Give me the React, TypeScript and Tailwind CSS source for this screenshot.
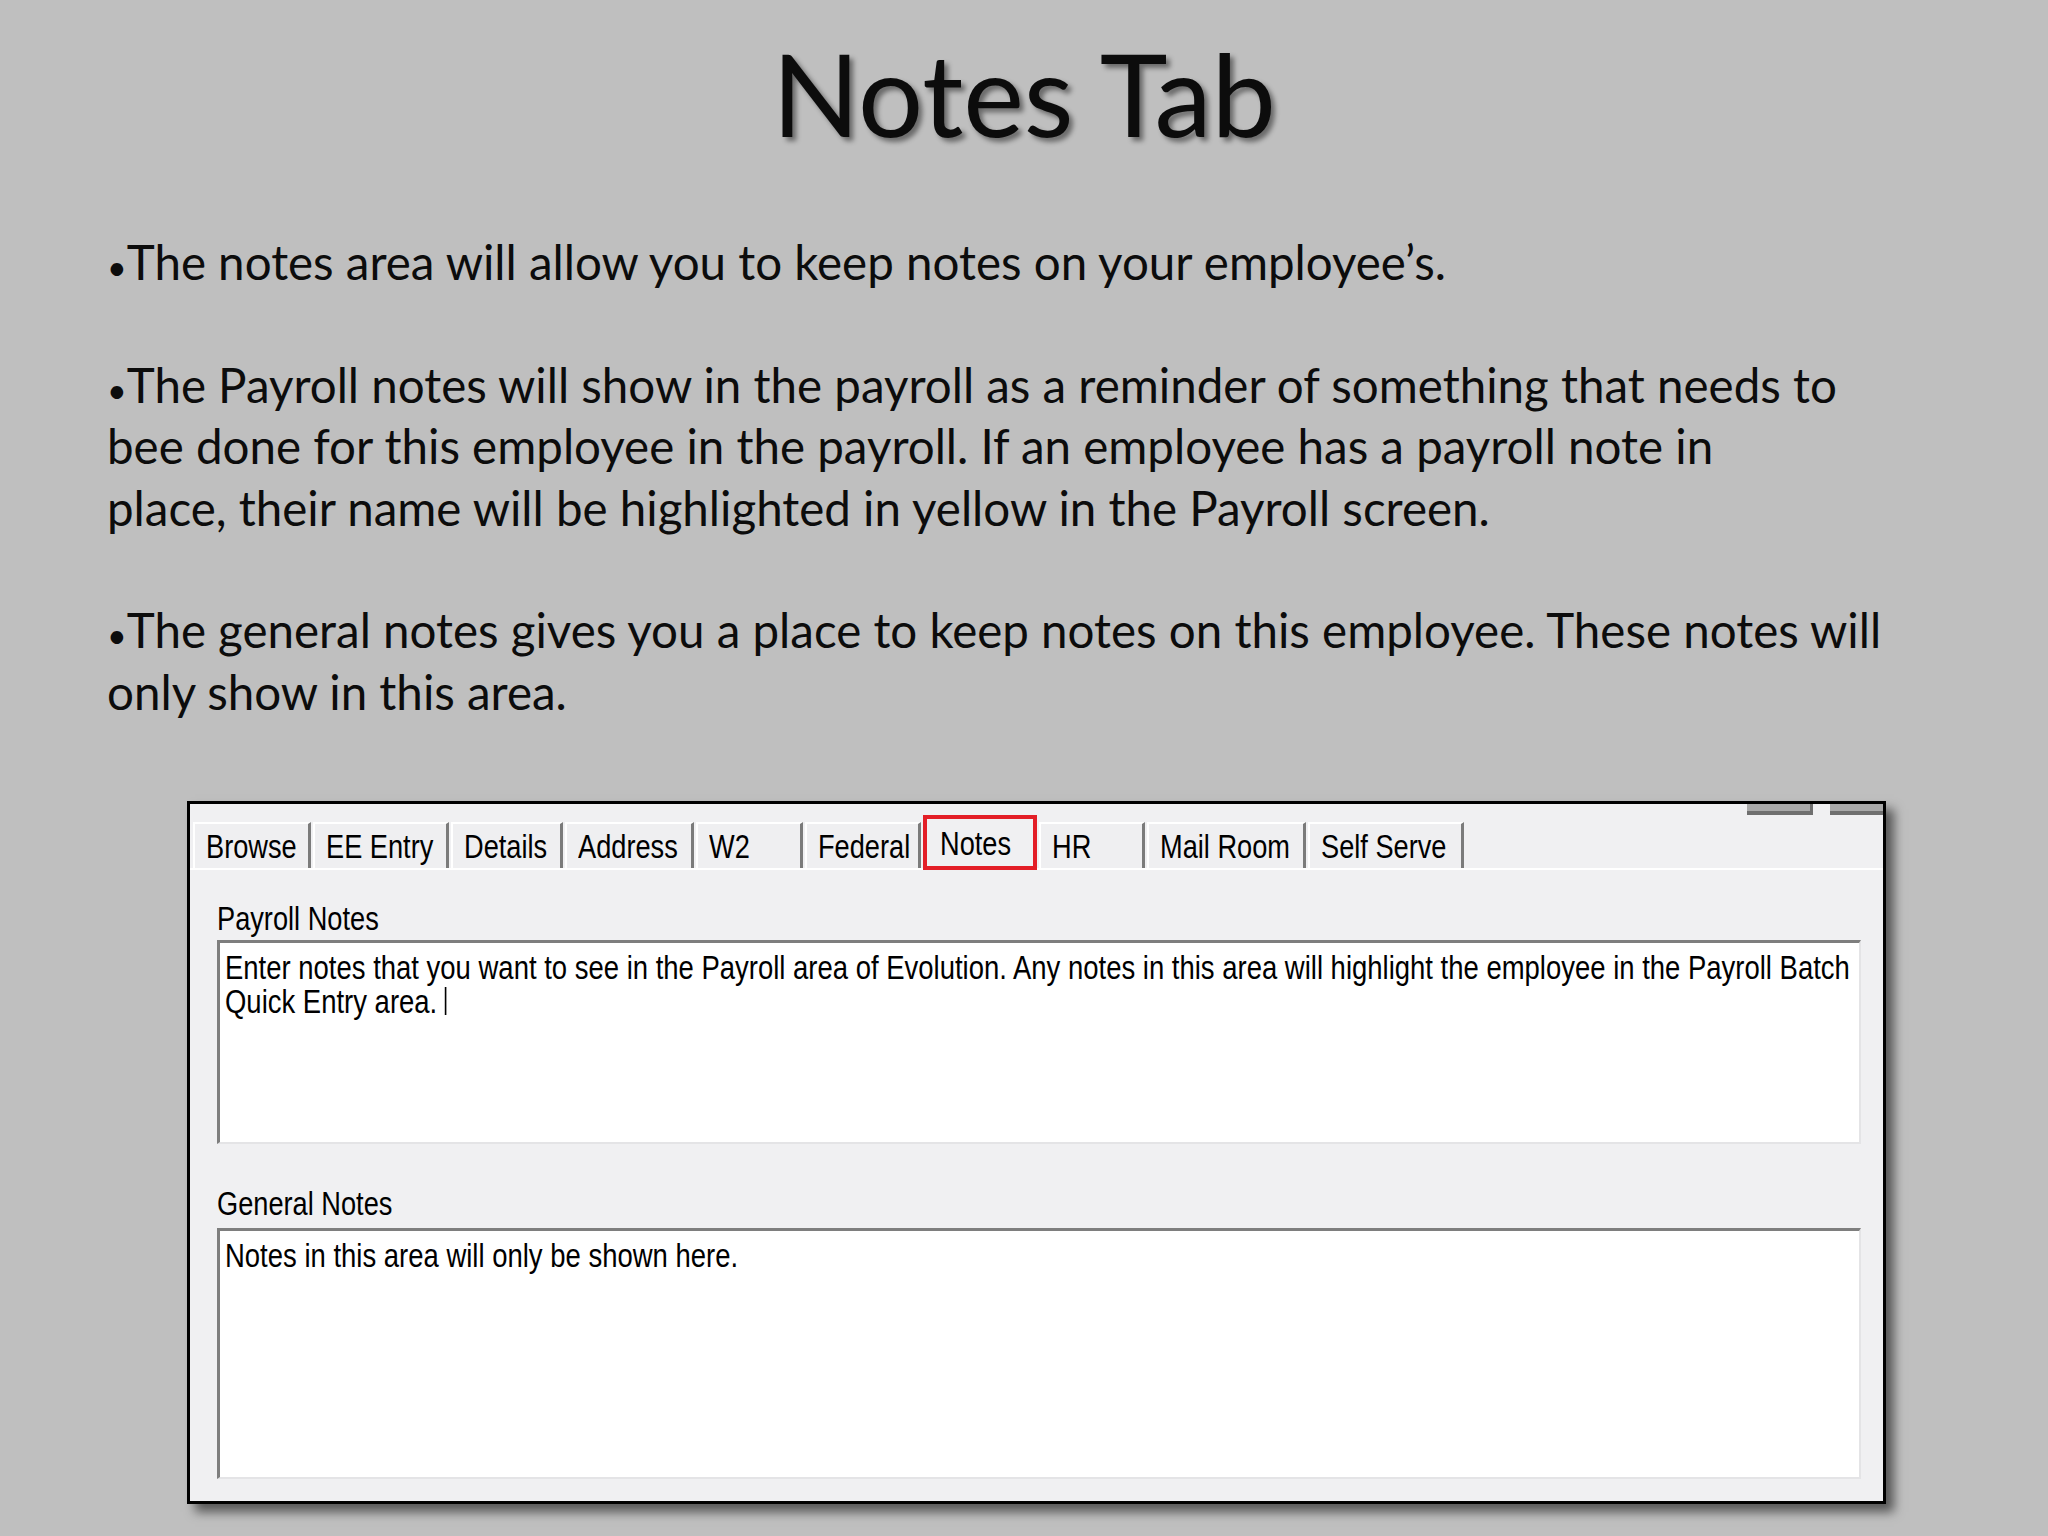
import React from "react";

// Tabs along the top of the employee screen, widths read off the screenshot
const tabs: { label: string; w: string; active?: boolean }[] = [
  { label: "Browse", w: "w-[118px]" },
  { label: "EE Entry", w: "w-[136px]" },
  { label: "Details", w: "w-[112px]" },
  { label: "Address", w: "w-[129px]" },
  { label: "W2", w: "w-[107px]" },
  { label: "Federal", w: "w-[116px]" },
  { label: "Notes", w: "w-[114px]", active: true },
  { label: "HR", w: "w-[106px]" },
  { label: "Mail Room", w: "w-[159px]" },
  { label: "Self Serve", w: "w-[156px]" },
];

// old windows bitmap font is much narrower than Arial, so squeeze it
const squeeze = "inline-block origin-left scale-x-[0.8] whitespace-nowrap";

function Tab({ label, w, active }: { label: string; w: string; active?: boolean }) {
  if (active) {
    return (
      <div
        className={`${w} relative z-10 mb-[-2px] flex h-[55px] shrink-0 items-start border-4 border-[#e31e27] bg-[#f0f0f2] pt-[7px] pl-[13px]`}
      >
        <span className={`${squeeze} leading-[34px]`}>{label}</span>
      </div>
    );
  }
  return (
    <div
      className={`${w} flex h-[46px] shrink-0 items-center border-t-2 border-l-2 border-r-[3px] border-t-white border-l-white border-r-[#7b7b7b] bg-[#efeff1] pl-[11px]`}
    >
      <span className={`${squeeze} leading-[34px]`}>{label}</span>
    </div>
  );
}

function NotesBox({ h, children }: { h: string; children: React.ReactNode }) {
  return (
    <div
      className={`${h} border-t-[3px] border-l-[3px] border-b-2 border-r-2 border-t-[#7e7e7e] border-l-[#7e7e7e] border-b-[#e4e4e6] border-r-[#e4e4e6] bg-white px-[5px] pt-[7px] leading-[34px]`}
    >
      {children}
    </div>
  );
}

function Bullet() {
  return <span className="text-[34px] leading-none">•</span>;
}

export default function App() {
  return (
    <div className="h-[1536px] w-[2048px] overflow-hidden bg-[#bfbfbf] font-['Lato',sans-serif] text-[#0c0c0c]">
      {/* Slide title */}
      <h1 className="pt-[35px] text-center text-[115px] leading-[115px] [text-shadow:4px_4px_5px_rgba(0,0,0,0.45)]">
        Notes Tab
      </h1>

      {/* Bullet paragraphs */}
      <div className="mt-[81px] pl-[107px] text-[47.5px] leading-[61.4px] whitespace-nowrap">
        <p className="h-[61.4px]"><Bullet />The notes area will allow you to keep notes on your employee’s.</p>
        <p className="h-[61.4px]" />
        <p className="h-[61.4px]"><Bullet />The Payroll notes will show in the payroll as a reminder of something that needs to</p>
        <p className="h-[61.4px]">bee done for this employee in the payroll. If an employee has a payroll note in</p>
        <p className="h-[61.4px]">place, their name will be highlighted in yellow in the Payroll screen.</p>
        <p className="h-[61.4px]" />
        <p className="h-[61.4px]"><Bullet />The general notes gives you a place to keep notes on this employee. These notes will</p>
        <p className="h-[61.4px]">only show in this area.</p>
      </div>

      {/* Screenshot of the Notes tab */}
      <div className="relative mt-[79px] ml-[187px] h-[703px] w-[1699px] border-[3px] border-black bg-[#f0f0f2] font-['Liberation_Sans',Arial,sans-serif] text-[34px] text-black shadow-[8px_8px_10px_rgba(0,0,0,0.55)]">
        {/* cut-off buttons at the top right */}
        <div className="absolute top-0 left-[1557px] h-[11px] w-[66px] border-b-[4px] border-r-[3px] border-[#6f6f6f] bg-[#a9a9a9]" />
        <div className="absolute top-0 left-[1640px] h-[11px] w-[53px] border-b-[4px] border-[#6f6f6f] bg-[#a9a9a9]" />

        {/* tab strip */}
        <div className="flex h-[66px] items-end gap-[2px] border-b-2 border-white pl-[3px]">
          {tabs.map((t) => (
            <Tab key={t.label} {...t} />
          ))}
        </div>

        {/* panel */}
        <div className="pr-[22px] pl-[27px]">
          <div className="mt-[31px] leading-[34px]">
            <span className={squeeze}>Payroll Notes</span>
          </div>
          <div className="mt-[5px]">
            <NotesBox h="h-[204px]">
              <div className="block origin-left scale-x-[0.808] whitespace-nowrap">
                Enter notes that you want to see in the Payroll area of Evolution. Any notes in this area will highlight the employee in the Payroll Batch
              </div>
              <div className="flex origin-left scale-x-[0.808] items-center whitespace-nowrap">
                Quick Entry area.
                <span className="ml-[9px] inline-block h-[28px] w-0 border-l-2 border-black" />
              </div>
            </NotesBox>
          </div>
          <div className="mt-[42px] leading-[34px]">
            <span className={squeeze}>General Notes</span>
          </div>
          <div className="mt-[8px]">
            <NotesBox h="h-[251px]">
              <div className="block origin-left scale-x-[0.808] whitespace-nowrap">Notes in this area will only be shown here.</div>
            </NotesBox>
          </div>
        </div>
      </div>
    </div>
  );
}
